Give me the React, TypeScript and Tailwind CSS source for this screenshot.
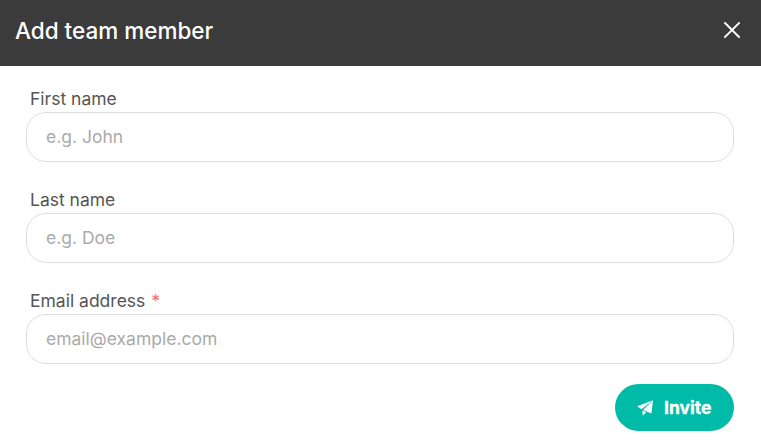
import React from "react";

type FieldProps = { id: string; label: string; placeholder: string; type?: string; required?: boolean };

function Field({ id, label, placeholder, type = "text", required }: FieldProps) {
  return (
    <div className="flex flex-col">
      <label htmlFor={id} className="flex h-[26px] items-center pl-1 text-[17.5px] leading-[26px] text-[#555555]">
        {label}
        {required && <span className="ml-1.5 text-[#ff6b6b]">*</span>}
      </label>
      <input
        id={id}
        type={type}
        placeholder={placeholder}
        className="h-[50px] w-full rounded-[20px] border border-[#dcdce6] bg-white px-[19px] pb-[2px] text-[17.5px] text-[#3b3b3b] outline-none placeholder:text-[#aaaaaa]"
      />
    </div>
  );
}

export default function App() {
  return (
    <div className="h-[443px] w-[761px] overflow-hidden bg-white font-['Inter',sans-serif]">
      <header className="flex h-[66px] items-center justify-between bg-[#3b3b3b] pr-5 pb-1 pl-[15px]">
        <h1 className="text-[22.5px] leading-7 font-medium text-white">Add team member</h1>
        <button aria-label="Close" className="pb-0.5 text-white">
          <svg width="18" height="18" viewBox="0 0 18 18" fill="none" stroke="currentColor" strokeWidth="1.9" strokeLinecap="square">
            <path d="M2 2 16 16M16 2 2 16" />
          </svg>
        </button>
      </header>
      <form className="flex flex-col gap-[25px] pt-5 pr-[27px] pl-[26px]">
        <Field id="first" label="First name" placeholder="e.g. John" />
        <Field id="last" label="Last name" placeholder="e.g. Doe" />
        <Field id="email" label="Email address" placeholder="email@example.com" type="email" required />
        <button type="button" className="-mt-[5px] flex h-[47px] w-[119px] items-center self-end rounded-full bg-[#00bba7] pl-[22px] text-[17.5px] font-bold text-white [-webkit-text-stroke:0.3px_white]">
          <svg className="mr-[11px]" width="16" height="16" viewBox="0 0 16 16" fill="currentColor" strokeWidth="0">
            <path d="M0.3 6.2 16 .2 4.4 9.2Z" />
            <path d="M16 .2 14.4 13.5 6 9.9Z" />
            <path d="M5.3 10.5 9.2 12.2 5.8 15.8Z" />
          </svg>
          <span className="pt-0.5">Invite</span>
        </button>
      </form>
    </div>
  );
}
